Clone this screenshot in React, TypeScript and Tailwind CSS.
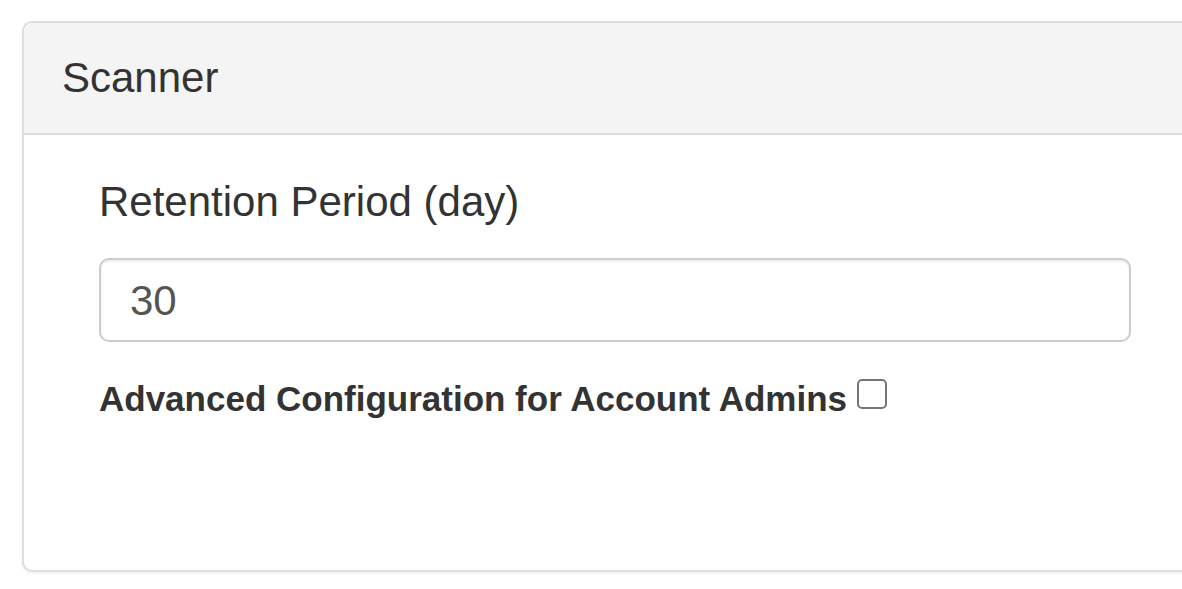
import React from "react";

export default function App() {
  return (
    <div className="w-[1182px] h-[589px] bg-white overflow-hidden pt-[21px] pl-[22px]" style={{ fontFamily: '"Liberation Sans", Arial, sans-serif' }}>
      <div className="w-[1220px] h-[551px] border-2 border-[#dddddd] rounded-[10px] bg-white shadow-[0_2px_3px_rgba(0,0,0,0.05)] flex flex-col overflow-hidden">
        <div className="bg-[#f4f4f4] border-b-2 border-[#dddddd] px-[38px] pt-[25px] pb-[25px]">
          <h3 className="text-[42px] leading-[60px] text-[#333333] font-normal">Scanner</h3>
        </div>
        <div className="pt-[37px] pl-[75px]">
          <div className="w-[1032px] flex flex-col">
            <label className="text-[42px] leading-[60px] text-[#333333] mb-[26px]">Retention Period (day)</label>
            <div className="h-[84px] border-2 border-[#cccccc] rounded-[10px] shadow-[inset_0_2px_2px_rgba(0,0,0,0.075)] flex items-center pl-[29px] text-[42px] text-[#555555]">
              30
            </div>
            <div className="mt-[32px] flex items-center">
              <span className="text-[35px] leading-[50px] font-bold text-[#333333]">Advanced Configuration for Account Admins</span>
              <span className="ml-[10px] -mt-[10px] w-[30px] h-[30px] border-2 border-[#767676] rounded-[5px] bg-white"></span>
            </div>
          </div>
        </div>
      </div>
    </div>
  );
}
